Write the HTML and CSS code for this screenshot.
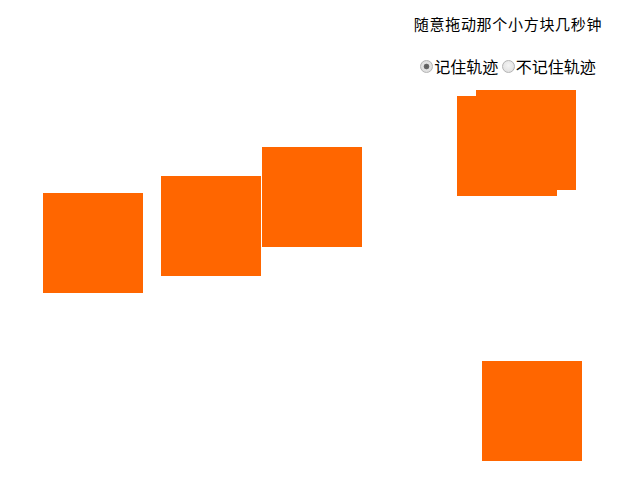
FILE: index.html
```html
<!DOCTYPE html>
<html lang="zh-CN">
<head>
<meta charset="utf-8">
<title>拖动小方块</title>
<link rel="stylesheet" href="styles.css">
</head>
<body>
<div class="panel">
  <p class="tip">随意拖动那个小方块几秒钟</p>
  <p class="opts"><label><input type="radio" name="mode" checked>记住轨迹</label> <label><input type="radio" name="mode">不记住轨迹</label></p>
</div>
<div class="box b1"></div>
<div class="box b2"></div>
<div class="box b3"></div>
<div class="box b4"></div>
<div class="box b5"></div>
<div class="box b6"></div>
</body>
</html>
```
FILE: styles.css
```css
html, body {
  margin: 0;
  padding: 0;
  background: #fff;
  width: 642px;
  height: 492px;
  overflow: hidden;
  font-family: "Noto Sans CJK SC", "Noto Sans", sans-serif;
  color: #000;
}
.panel {
  position: absolute;
  left: 408px;
  top: 0;
  width: 200px;
  text-align: center;
}
.tip {
  margin: 14px 0 0;
  font-size: 15px;
  line-height: 20px;
  letter-spacing: 0.7px;
}
.opts {
  margin: 22px 0 0;
  font-size: 16px;
  line-height: 20px;
}
.opts input {
  -webkit-appearance: none;
  appearance: none;
  box-sizing: border-box;
  width: 13px;
  height: 13px;
  margin: 0 1px 0 0;
  vertical-align: 0;
  border: 1px solid #b4b4b4;
  border-radius: 50%;
  background: radial-gradient(circle at 50% 40%, #f4f4f4 0%, #dcdcdc 100%);
}
.opts input:checked {
  background: radial-gradient(circle, #5a5a5a 0, #6a6a6a 2.5px, #e4e4e4 3.2px, #d8d8d8 100%);
}
.box {
  position: absolute;
  width: 100px;
  height: 100px;
  background: #ff6600;
}
.b1 { left: 43px; top: 193px; }
.b2 { left: 161px; top: 176px; }
.b3 { left: 262px; top: 147px; }
.b4 { left: 457px; top: 96px; }
.b5 { left: 476px; top: 90px; }
.b6 { left: 482px; top: 361px; }
```
